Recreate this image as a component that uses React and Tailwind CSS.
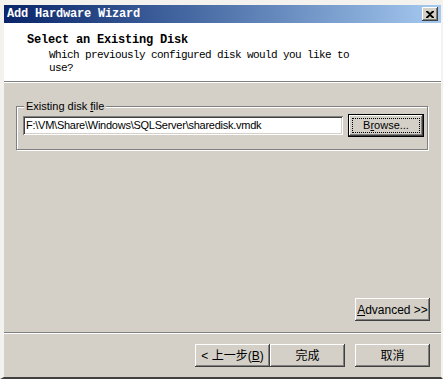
import React from 'react';

const ui = { fontFamily: '"Liberation Sans", Arial, sans-serif' };
const cjk = { fontFamily: '"Liberation Sans", "Noto Sans CJK SC", sans-serif' };
const mono = { fontFamily: '"Liberation Mono", "Noto Sans CJK SC", monospace' };

function Button({ children, className = '', style }) {
  return (
    <div
      className={`h-[23px] w-[75px] flex items-center justify-center bg-[#D4D0C8] text-[12px] text-black shadow-[inset_-1px_-1px_0_#404040,inset_1px_1px_0_#ffffff,inset_-2px_-2px_0_#808080] ${className}`}
      style={style}
    >
      {children}
    </div>
  );
}

export default function App() {
  return (
    <div className="w-[445px] h-[380px] bg-white">
      <div className="w-[443px] h-[379px] bg-[#D4D0C8] border-t-[5px] border-l-[4px] border-r-[2px] border-b-[2px] border-t-[#f3f2ee] border-l-[#f3f2ee] border-r-[#f3f2ee] border-b-[#404040] flex flex-col">
        {/* Title bar */}
        <div className="h-[18px] flex items-center justify-between bg-gradient-to-r from-[#0A246A] to-[#A6CAF0]">
          <span className="pl-[3px] text-[12px] font-bold text-white tracking-[-0.2px] leading-none" style={mono}>
            Add Hardware Wizard
          </span>
          <div className="w-[16px] h-[14px] mr-[3px] bg-[#D4D0C8] flex items-center justify-center shadow-[inset_-1px_-1px_0_#404040,inset_1px_1px_0_#ffffff,inset_-2px_-2px_0_#808080]">
            <svg width="8" height="7" viewBox="0 0 8 7">
              <path d="M0 0h2l2 2 2-2h2v1l-3 2.5 3 2.5v1h-2l-2-2-2 2h-2v-1l3-2.5-3-2.5z" fill="#000" />
            </svg>
          </div>
        </div>

        {/* Header */}
        <div className="h-[58px] bg-white pt-[11px]">
          <div className="pl-[23px] text-[12px] leading-[13px] font-bold tracking-[-0.2px] text-black" style={mono}>
            Select an Existing Disk
          </div>
          <div className="pl-[45px] mt-[2px] text-[11px] leading-[13px] tracking-[-0.6px] text-black" style={mono}>
            Which previously configured disk would you like to
            <br />
            use?
          </div>
        </div>
        <div className="h-[2px] border-t border-t-[#808080] border-b border-b-white" />

        {/* Body */}
        <div className="relative mt-[23px] ml-[12px] w-[412px] h-[44px] border border-[#808080] shadow-[inset_1px_1px_0_#ffffff,1px_1px_0_#ffffff]">
          <span className="absolute -top-[8px] left-[7px] px-[2px] bg-[#D4D0C8] text-[11px] leading-[14px] text-black" style={ui}>
            Existing disk <span className="underline">f</span>ile
          </span>
          <div className="flex items-center pl-[6px] pt-[7px]">
            <div className="w-[320px] h-[19px] bg-white flex items-center pl-[3px] text-[11px] tracking-[-0.25px] text-black shadow-[inset_1px_1px_0_#808080,inset_-1px_-1px_0_#ffffff,inset_2px_2px_0_#404040,inset_-2px_-2px_0_#D4D0C8]" style={ui}>
              F:\VM\Share\Windows\SQLServer\sharedisk.vmdk
            </div>
            <div className="ml-[5px] w-[76px] h-[23px] border border-black bg-[#D4D0C8] shadow-[inset_-1px_-1px_0_#404040,inset_1px_1px_0_#ffffff,inset_-2px_-2px_0_#808080]">
              <div className="m-[3px] h-[15px] border border-dotted border-black flex items-center justify-center text-[11px] text-black" style={ui}>
                B<span className="underline">r</span>owse...
              </div>
            </div>
          </div>
        </div>

        <div className="mt-[148px] flex justify-end pr-[11px]">
          <Button className="text-[11px]" style={ui}>
            <span className="underline">A</span>dvanced &gt;&gt;
          </Button>
        </div>

        <div className="mt-[11px] h-[2px] border-t border-t-[#808080] border-b border-b-white" />

        <div className="mt-[10px] flex justify-end pr-[11px]">
          <Button style={cjk}>
            &lt;&nbsp;上一步(<span className="underline">B</span>)
          </Button>
          <Button style={cjk}>完成</Button>
          <Button className="ml-[10px]" style={cjk}>取消</Button>
        </div>
      </div>
    </div>
  );
}
